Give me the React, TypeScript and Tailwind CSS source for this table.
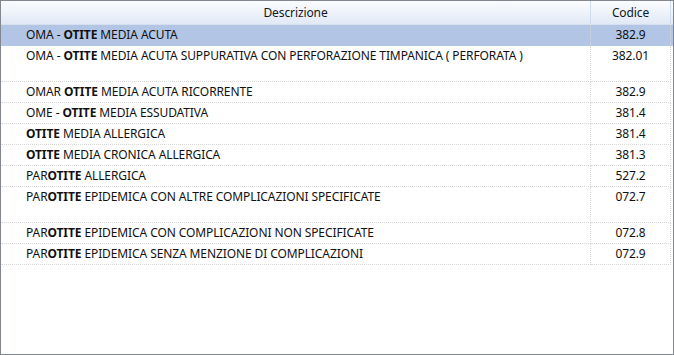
const rows = [
  { pre: "OMA - ", bold: "OTITE", post: " MEDIA ACUTA", code: "382.9", tall: false, selected: true },
  { pre: "OMA - ", bold: "OTITE", post: " MEDIA ACUTA SUPPURATIVA CON PERFORAZIONE TIMPANICA ( PERFORATA )", code: "382.01", tall: true },
  { pre: "OMAR ", bold: "OTITE", post: " MEDIA ACUTA RICORRENTE", code: "382.9" },
  { pre: "OME - ", bold: "OTITE", post: " MEDIA ESSUDATIVA", code: "381.4" },
  { pre: "", bold: "OTITE", post: " MEDIA ALLERGICA", code: "381.4" },
  { pre: "", bold: "OTITE", post: " MEDIA CRONICA ALLERGICA", code: "381.3" },
  { pre: "PAR", bold: "OTITE", post: " ALLERGICA", code: "527.2" },
  { pre: "PAR", bold: "OTITE", post: " EPIDEMICA CON ALTRE COMPLICAZIONI SPECIFICATE", code: "072.7", tall: true },
  { pre: "PAR", bold: "OTITE", post: " EPIDEMICA CON COMPLICAZIONI NON SPECIFICATE", code: "072.8" },
  { pre: "PAR", bold: "OTITE", post: " EPIDEMICA SENZA MENZIONE DI COMPLICAZIONI", code: "072.9" },
];

export default function App() {
  return (
    <div
      className="w-[674px] h-[355px] bg-white border border-[#828790] overflow-hidden text-[12px] tracking-[-0.1px] text-[#111]"
      style={{ fontFamily: '"Noto Sans", "Open Sans", sans-serif' }}
    >
      {/* column headers */}
      <div className="grid grid-cols-[590px_80px] h-[24px] bg-gradient-to-b from-[#fbfcfe] to-[#e1e9f6] border-b border-[#d5dfee]">
        <div className="flex items-center justify-center border-r border-[#d0dbee] text-[#101820]">
          Descrizione
        </div>
        <div className="flex items-center justify-center border-r border-[#d0dbee] text-[#101820]">
          Codice
        </div>
      </div>

      {rows.map((r, i) => (
        <div
          key={i}
          className={
            "grid grid-cols-[590px_80px] " +
            (r.tall ? "h-[36px] " : "h-[21px] ") +
            (r.selected ? "bg-[#b2c5e5]" : "")
          }
        >
          <div
            className={
              "pl-[25px] leading-[20px] border-r border-dotted border-[#d8d8d8] " +
              (r.selected ? "" : "border-b")
            }
          >
            {r.pre}
            <b>{r.bold}</b>
            {r.post}
          </div>
          <div
            className={
              "text-center leading-[20px] border-r border-dotted border-[#d8d8d8] " +
              (r.selected ? "" : "border-b")
            }
          >
            {r.code}
          </div>
        </div>
      ))}
    </div>
  );
}
